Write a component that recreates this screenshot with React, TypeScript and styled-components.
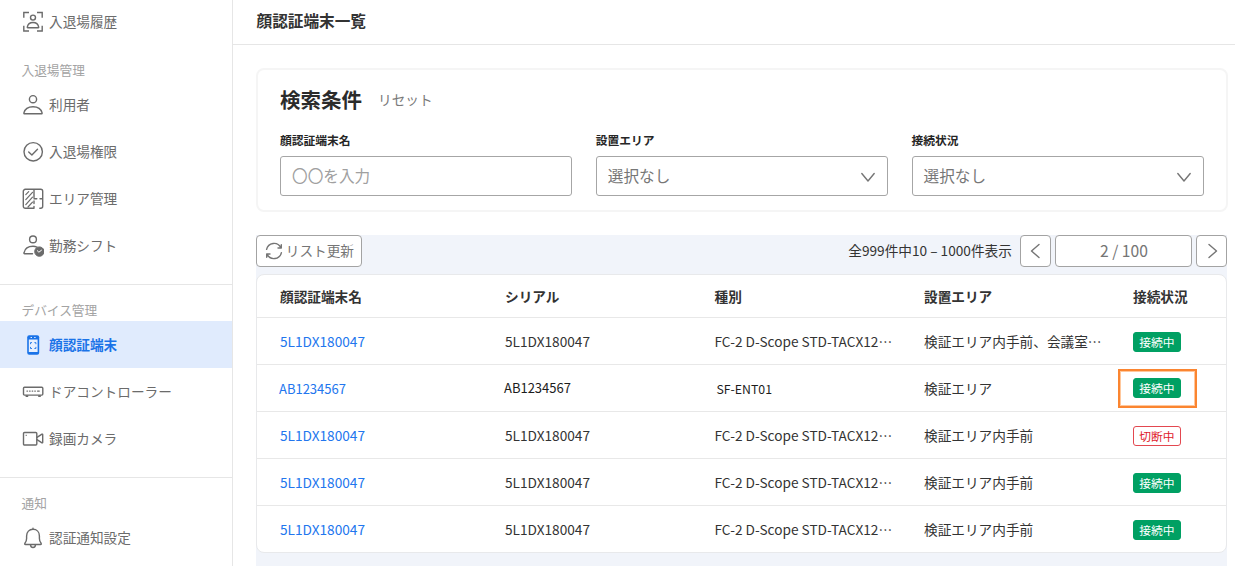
import React from 'react';
import styled, { createGlobalStyle, css } from 'styled-components';

const GlobalStyle = createGlobalStyle`
  *, *::before, *::after { box-sizing: border-box; }
  html, body { margin: 0; padding: 0; background: #fff; overflow: hidden; }
  body {
    font-family: "Noto Sans CJK JP", "Noto Sans", sans-serif;
    font-size: 13.67px;
    line-height: 20px;
    color: #333;
  }
  button, input { font: inherit; }
`;

const Shell = styled.div`
  display: flex;
  width: 1235px;
  height: 566px;
  overflow: hidden;
`;

const Sidebar = styled.nav`
  flex: none;
  width: 233px;
  border-right: 1px solid #e6e6e6;
`;

const NavGroup = styled.section<{ $first?: boolean }>`
  ${(p) =>
    p.$first
      ? css`
          margin-top: -2px;
        `
      : css`
          & + & {
            margin-top: 15px;
            border-top: 1px solid #e6e6e6;
          }
        `}
`;

const GroupLabel = styled.h2`
  margin: 0;
  height: 36px;
  padding: 15px 0 0 21.5px;
  font-size: 12.7px;
  font-weight: 400;
  color: #a3a3a3;
`;

const NavItem = styled.a<{ $active?: boolean }>`
  display: flex;
  align-items: center;
  gap: 5px;
  height: 47px;
  padding-left: 22px;
  color: ${(p) => (p.$active ? '#1a73e8' : '#6b6b6b')};
  font-weight: ${(p) => (p.$active ? 700 : 400)};
  background: ${(p) => (p.$active ? '#e0ebfd' : 'transparent')};
  white-space: nowrap;
`;

const NavText = styled.span`
  padding-bottom: 2px;
`;

const NavIcon = styled.svg`
  flex: none;
  width: 22px;
  height: 22px;
  fill: none;
  stroke: currentColor;
  stroke-width: 1.4;
  stroke-linecap: round;
  stroke-linejoin: round;
`;

const Main = styled.main`
  flex: 1;
  min-width: 0;
  display: flex;
  flex-direction: column;
`;

const PageHeader = styled.header`
  flex: none;
  display: flex;
  align-items: center;
  height: 45px;
  padding: 0 0 2px 23.5px;
  border-bottom: 1px solid #e6e6e6;
`;

const PageTitle = styled.h1`
  margin: 0;
  font-size: 15.65px;
  font-weight: 700;
`;

const SearchCard = styled.section`
  flex: none;
  width: 972px;
  height: 144px;
  margin: 23px 0 0 23px;
  padding: 15px 22px 0;
  border: 2px solid #f5f5f5;
  border-radius: 8px;
`;

const SearchHead = styled.div`
  display: flex;
  align-items: center;
  gap: 16px;
  height: 28px;
`;

const SearchTitle = styled.h2`
  margin: 0;
  font-size: 20.5px;
  line-height: 28px;
  font-weight: 700;
  color: #2b2b2b;
`;

const ResetLink = styled.a`
  color: #7a7a7a;
`;

const Fields = styled.div`
  display: grid;
  grid-template-columns: repeat(3, 1fr);
  gap: 23.3px;
  margin-top: 17px;
`;

const Field = styled.div`
  min-width: 0;
`;

const FieldLabel = styled.div`
  height: 20px;
  margin-bottom: 6px;
  font-size: 11.75px;
  font-weight: 700;
  color: #262626;
`;

const Control = styled.div<{ $placeholder?: boolean }>`
  display: flex;
  align-items: center;
  justify-content: space-between;
  height: 40px;
  padding: 0 11px;
  border: 1px solid #a6a6a6;
  border-radius: 3px;
  font-size: 15.65px;
  color: ${(p) => (p.$placeholder ? '#a0a0a0' : '#777')};
`;

const Chevron = styled.svg<{ $size?: number; $drop?: number }>`
  flex: none;
  width: ${(p) => p.$size ?? 16}px;
  height: ${(p) => p.$size ?? 16}px;
  margin-top: ${(p) => p.$drop ?? 0}px;
  fill: none;
  stroke: #757575;
  stroke-width: 1.4;
  stroke-linecap: round;
  stroke-linejoin: round;
`;

const ListArea = styled.section`
  flex: 1;
  width: 971px;
  margin: 23px 0 0 23.4px;
  background: #f1f4fa;
`;

const Toolbar = styled.div`
  display: flex;
  align-items: center;
  height: 39px;
  padding-bottom: 7px;
`;

const ToolButton = styled.button<{ $width: number }>`
  display: flex;
  align-items: center;
  justify-content: center;
  gap: 3px;
  width: ${(p) => p.$width}px;
  height: 32px;
  padding: 0;
  border: 1px solid #a3a3a3;
  border-radius: 4px;
  background: #fff;
  color: #757575;
`;

const ButtonText = styled.span`
  padding-bottom: 2px;
`;

const Pager = styled.div`
  display: flex;
  align-items: center;
  gap: 4px;
  margin-left: auto;
`;

const Count = styled.span`
  margin-right: 4.5px;
  padding-bottom: 2px;
  font-size: 13.67px;
`;

const PageBox = styled.div`
  display: flex;
  align-items: center;
  justify-content: center;
  width: 137px;
  height: 32px;
  border: 1px solid #a3a3a3;
  border-radius: 4px;
  background: #fff;
  font-size: 15.65px;
  color: #757575;
`;

const Table = styled.div`
  border: 1px solid #e8e9eb;
  border-radius: 8px;
  background: #fff;
`;

const Row = styled.div<{ $head?: boolean }>`
  display: grid;
  grid-template-columns: 225px 209.5px 209.5px 209px 1fr;
  align-items: center;
  height: ${(p) => (p.$head ? 42 : 47)}px;
  padding-left: 22.6px;
  padding-bottom: ${(p) => (p.$head ? 1 : 0)}px;
  font-weight: ${(p) => (p.$head ? 700 : 400)};
  white-space: nowrap;

  & + & {
    border-top: 1px solid #e8e8e8;
  }
`;

const Cell = styled.div<{ $link?: boolean; $small?: boolean }>`
  ${(p) => p.$link && 'color: #2276ee;'}
  ${(p) =>
    p.$small &&
    css`
      margin-left: -1px;
      padding-top: 2px;
      font-size: 13px;
      ${!p.$link && 'color: #1c1c1c;'}
    `}
`;

const KindCell = styled(Cell)`
  ${(p) =>
    p.$small &&
    css`
      padding-left: 3px;
      font-size: 12.3px;
    `}
`;

const SerialCell = styled(Cell)`
  ${(p) => p.$small && 'padding-top: 0;'}
`;

const Dots = styled.span`
  display: inline-block;
`;

const StatusCell = styled.div<{ $marked?: boolean }>`
  position: relative;
  display: flex;
  align-items: center;
  height: 20px;
  margin-top: ${(p) => (p.$marked ? 0 : 2)}px;
`;

const Badge = styled.span<{ $off?: boolean }>`
  display: flex;
  align-items: center;
  justify-content: center;
  width: 48px;
  height: 20px;
  border: 1px solid ${(p) => (p.$off ? '#e34850' : '#00a063')};
  border-radius: 3px;
  background: ${(p) => (p.$off ? '#fff' : '#00a063')};
  color: ${(p) => (p.$off ? '#e0202c' : '#fff')};
  font-size: 11.75px;
  line-height: 18px;
`;

const Marker = styled.span`
  position: absolute;
  left: -15px;
  top: -9px;
  width: 79px;
  height: 39px;
  border: 2.5px solid #fb8530;
  outline: 0.5px solid #ffc79c;
  outline-offset: -3px;
`;

const HistoryIcon = () => (
  <NavIcon viewBox="0 0 22 22">
    <path d="M1.800 6.800V1.500h5.200M15 1.500h5.200v5.300M20.200 14.700V20H15M7 20H1.800v-5.300" strokeLinecap="butt" strokeLinejoin="miter" />
    <circle cx="11" cy="6.600" r="2.500" />
    <path d="M5.700 16.700c-.3 0-.5-.2-.4-.6.500-2.900 2.800-4.600 5.700-4.600s5.200 1.700 5.700 4.600c.1.400-.1.600-.4.600z" />
  </NavIcon>
);

const UserIcon = () => (
  <NavIcon viewBox="0 0 22 22">
    <circle cx="11" cy="5.200" r="3.600" />
    <path d="M2.600 19.800c-.6 0-.8-.4-.7-.9.9-3.800 4.600-6.200 9.100-6.200s8.200 2.400 9.100 6.200c.1.500-.1.900-.7.900z" />
  </NavIcon>
);

const CheckIcon = () => (
  <NavIcon viewBox="0 0 22 22">
    <circle cx="11.200" cy="10.800" r="9.200" />
    <path d="M6.700 11l3.200 3 5.600-5.700" />
  </NavIcon>
);

const AreaIcon = () => (
  <NavIcon viewBox="0 0 22 22">
    <path d="M12 20.300H3.300a2 2 0 0 1-2-2V3.300a2 2 0 0 1 2-2h15.400a2 2 0 0 1 2 2v15a2 2 0 0 1-2 2h-.9M12 1.300v8.200M12 13v2.500M12 18.500v1.800M12 10.800h2.800M18 10.800h2.700" />
    <path d="M3.800 6.600l2.900-2.900M3.800 11.600l6.700-7.300M3.800 16.600L10.500 9.200M6 19l4.500-4.800" strokeWidth="1.200" />
  </NavIcon>
);

const ShiftIcon = () => (
  <NavIcon viewBox="0 0 22 22">
    <circle cx="11" cy="4.400" r="3.400" />
    <path d="M10.500 18.700H2.600c-.6 0-.8-.4-.6-.9.9-4.200 4.600-6.500 9-6.500 1.500 0 2.800.3 4 .8" />
    <circle cx="17.400" cy="16.600" r="4.700" fill="currentColor" stroke="currentColor" strokeWidth="1" />
    <path d="M15.300 15.700l1.600 1.500 2.600-2" stroke="#fff" strokeWidth="1" />
  </NavIcon>
);

const TerminalIcon = () => (
  <NavIcon viewBox="0 0 22 22">
    <rect x="5.200" y="1.300" width="12" height="19.400" rx="2" fill="currentColor" stroke="none" />
    <rect x="6.800" y="5.500" width="8.800" height="12.500" fill="#e8f0fe" stroke="none" />
    <path d="M8.500 10.200V8.600h1.500M12.400 8.600h1.500v1.600M13.900 12.900v1.600h-1.500M10 14.500H8.500v-1.600" strokeWidth="0.900" strokeLinecap="butt" strokeLinejoin="miter" />
    <path d="M9 3.500h.6M12.600 3.500h.6" stroke="#fff" strokeWidth="0.900" />
  </NavIcon>
);

const ControllerIcon = () => (
  <NavIcon viewBox="0 0 22 22">
    <rect x="1.500" y="6.200" width="19.300" height="7.900" rx="1" />
    <path d="M3.600 15.200h2.600M16.200 15.200h2.600" strokeWidth="1.700" strokeLinecap="butt" />
    <path d="M5 10.100h.5M7.600 10.100h.5M10.200 10.100h.5M12.800 10.100h.5M15.600 10.100h1.600" strokeWidth="1.400" />
  </NavIcon>
);

const CameraIcon = () => (
  <NavIcon viewBox="0 0 22 22">
    <rect x="1.500" y="4.500" width="13.300" height="12.500" rx="1" />
    <path d="M15 9.400l5-3.200c.4-.2.700 0 .7.400v7.800c0 .4-.3.600-.7.400l-5-3.200" />
    <path d="M4 7.300h.5" strokeWidth="1" />
  </NavIcon>
);

const BellIcon = () => (
  <NavIcon viewBox="0 0 22 22">
    <path d="M11 1.100v1.200M3.500 17.500c-.8 0-1-.6-.6-1.200 1.200-1.500 1.700-2.600 1.700-4.800V8.900c0-3.900 2.600-6.600 6.400-6.600s6.400 2.700 6.400 6.600v2.600c0 2.200.5 3.300 1.700 4.800.4.600.2 1.200-.6 1.200z" />
    <path d="M8.500 17.900c.2 1.700 1.200 2.600 2.500 2.600s2.300-.9 2.500-2.600" />
  </NavIcon>
);

const RefreshIcon = () => (
  <Chevron viewBox="0 0 18 18" $size={18}>
    <path d="M1.600 7.400A7.600 7.600 0 0 1 15.800 5.600M16.400 10.600A7.600 7.600 0 0 1 2.200 12.400M16.300 2.700v3.300h-3.300M1.700 15.300V12h3.300" />
  </Chevron>
);

type Device = {
  name: string;
  kind: string;
  area: string;
  online: boolean;
  marked?: boolean;
  kindCut?: boolean;
};

const KIND = 'FC-2 D-Scope STD-TACX12';

const devices: Device[] = [
  { name: '5L1DX180047', kind: KIND, kindCut: true, area: '検証エリア内手前、会議室…', online: true },
  { name: 'AB1234567', kind: 'SF-ENT01', area: '検証エリア', online: true, marked: true },
  { name: '5L1DX180047', kind: KIND, kindCut: true, area: '検証エリア内手前', online: false },
  { name: '5L1DX180047', kind: KIND, kindCut: true, area: '検証エリア内手前', online: true },
  { name: '5L1DX180047', kind: KIND, kindCut: true, area: '検証エリア内手前', online: true },
];

const SelectField = ({ label }: { label: string }) => (
  <Field>
    <FieldLabel>{label}</FieldLabel>
    <Control>
      選択なし
      <Chevron viewBox="0 0 16 16" $drop={1}>
        <path d="M1.800 4.500L8 12 14.200 4.500" />
      </Chevron>
    </Control>
  </Field>
);

export default function App() {
  return (
    <>
      <GlobalStyle />
      <Shell lang="ja">
        <Sidebar>
          <NavGroup $first>
            <NavItem><HistoryIcon /><NavText>入退場履歴</NavText></NavItem>
            <GroupLabel>入退場管理</GroupLabel>
            <NavItem><UserIcon /><NavText>利用者</NavText></NavItem>
            <NavItem><CheckIcon /><NavText>入退場権限</NavText></NavItem>
            <NavItem><AreaIcon /><NavText>エリア管理</NavText></NavItem>
            <NavItem><ShiftIcon /><NavText>勤務シフト</NavText></NavItem>
          </NavGroup>
          <NavGroup>
            <GroupLabel>デバイス管理</GroupLabel>
            <NavItem $active><TerminalIcon /><NavText>顔認証端末</NavText></NavItem>
            <NavItem><ControllerIcon /><NavText>ドアコントローラー</NavText></NavItem>
            <NavItem><CameraIcon /><NavText>録画カメラ</NavText></NavItem>
          </NavGroup>
          <NavGroup>
            <GroupLabel>通知</GroupLabel>
            <NavItem><BellIcon /><NavText>認証通知設定</NavText></NavItem>
          </NavGroup>
        </Sidebar>
        <Main>
          <PageHeader>
            <PageTitle>顔認証端末一覧</PageTitle>
          </PageHeader>
          <SearchCard>
            <SearchHead>
              <SearchTitle>検索条件</SearchTitle>
              <ResetLink>リセット</ResetLink>
            </SearchHead>
            <Fields>
              <Field>
                <FieldLabel>顔認証端末名</FieldLabel>
                <Control $placeholder>〇〇を入力</Control>
              </Field>
              <SelectField label="設置エリア" />
              <SelectField label="接続状況" />
            </Fields>
          </SearchCard>
          <ListArea>
            <Toolbar>
              <ToolButton $width={106}>
                <RefreshIcon />
                <ButtonText>リスト更新</ButtonText>
              </ToolButton>
              <Pager>
                <Count>全999件中10 – 1000件表示</Count>
                <ToolButton $width={31} aria-label="前へ">
                  <Chevron viewBox="0 0 16 16"><path d="M11 1.500L3.500 8l7.500 6.500" /></Chevron>
                </ToolButton>
                <PageBox>2 / 100</PageBox>
                <ToolButton $width={31} aria-label="次へ">
                  <Chevron viewBox="0 0 16 16"><path d="M5 1.500L12.500 8 5 14.500" /></Chevron>
                </ToolButton>
              </Pager>
            </Toolbar>
            <Table>
              <Row $head>
                <Cell>顔認証端末名</Cell>
                <Cell>シリアル</Cell>
                <Cell>種別</Cell>
                <Cell>設置エリア</Cell>
                <Cell>接続状況</Cell>
              </Row>
              {devices.map((d, i) => (
                <Row key={i}>
                  <Cell $link $small={d.marked}>{d.name}</Cell>
                  <SerialCell $small={d.marked}>{d.name}</SerialCell>
                  <KindCell $small={d.marked}>
                    {d.kind}
                    {d.kindCut && <Dots>…</Dots>}
                  </KindCell>
                  <Cell>{d.area}</Cell>
                  <StatusCell $marked={d.marked}>
                    <Badge $off={!d.online}>{d.online ? '接続中' : '切断中'}</Badge>
                    {d.marked && <Marker />}
                  </StatusCell>
                </Row>
              ))}
            </Table>
          </ListArea>
        </Main>
      </Shell>
    </>
  );
}
